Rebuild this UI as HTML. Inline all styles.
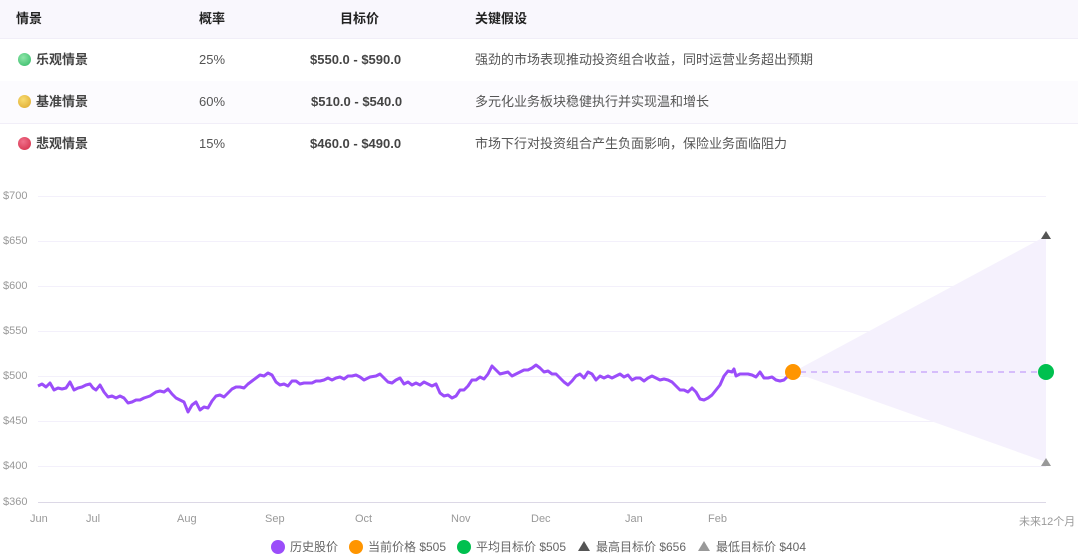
<!DOCTYPE html><html><head><meta charset="utf-8"><style>
body{margin:0;width:1087px;height:558px;background:#fff;font-family:"Liberation Sans","Noto Sans CJK SC",sans-serif;overflow:hidden;position:relative}
.row{position:absolute;left:0;width:1078px;height:42px;border-bottom:1px solid #f1eef8;font-size:13px;color:#555}
.row div{position:absolute;top:0;line-height:42px}
.h{background:#f9f7fd;height:38px;color:#222;font-weight:bold;font-size:13px}
.h div{line-height:38px}
.dot{display:inline-block;width:13px;height:13px;border-radius:50%;vertical-align:-2px;margin-right:5px}
.b{font-weight:bold;color:#444}
.ax{position:absolute;font-size:11px;color:#999}
</style></head><body>
<div class="row h" style="top:0"><div style="left:16px">情景</div><div style="left:199px">概率</div><div style="left:340px">目标价</div><div style="left:475px">关键假设</div></div>
<div class="row" style="top:39px"><div style="left:18px" class="b"><span class="dot" style="background:radial-gradient(circle at 40% 35%,#8ee6a8,#2fb865)"></span>乐观情景</div><div style="left:199px">25%</div><div style="left:310px" class="b">$550.0 - $590.0</div><div style="left:475px">强劲的市场表现推动投资组合收益，同时运营业务超出预期</div></div>
<div class="row" style="top:81px;background:#fcfbfe"><div style="left:18px" class="b"><span class="dot" style="background:radial-gradient(circle at 40% 35%,#f8dc70,#dca52a)"></span>基准情景</div><div style="left:199px">60%</div><div style="left:311px" class="b">$510.0 - $540.0</div><div style="left:475px">多元化业务板块稳健执行并实现温和增长</div></div>
<div class="row" style="top:123px;border:none"><div style="left:18px" class="b"><span class="dot" style="background:radial-gradient(circle at 40% 35%,#f0708a,#d22a45)"></span>悲观情景</div><div style="left:199px">15%</div><div style="left:310px" class="b">$460.0 - $490.0</div><div style="left:475px">市场下行对投资组合产生负面影响，保险业务面临阻力</div></div>

<div class="ax" style="left:3px;top:190px">$700</div>
<div class="ax" style="left:3px;top:235px">$650</div>
<div class="ax" style="left:3px;top:280px">$600</div>
<div class="ax" style="left:3px;top:325px">$550</div>
<div class="ax" style="left:3px;top:370px">$500</div>
<div class="ax" style="left:3px;top:415px">$450</div>
<div class="ax" style="left:3px;top:460px">$400</div>
<div class="ax" style="left:3px;top:496px">$360</div>
<div class="ax" style="left:30px;top:513px">Jun</div>
<div class="ax" style="left:86px;top:513px">Jul</div>
<div class="ax" style="left:177px;top:513px">Aug</div>
<div class="ax" style="left:265px;top:513px">Sep</div>
<div class="ax" style="left:355px;top:513px">Oct</div>
<div class="ax" style="left:451px;top:513px">Nov</div>
<div class="ax" style="left:531px;top:513px">Dec</div>
<div class="ax" style="left:625px;top:513px">Jan</div>
<div class="ax" style="left:708px;top:513px">Feb</div>
<div class="ax" style="left:1019px;top:513px">未来12个月</div>

<svg style="position:absolute;left:0;top:0" width="1087" height="558">
<g stroke="#f3f0fb" stroke-width="1">
<line x1="38" x2="1046" y1="196.5" y2="196.5"/><line x1="38" x2="1046" y1="241.5" y2="241.5"/><line x1="38" x2="1046" y1="286.5" y2="286.5"/><line x1="38" x2="1046" y1="331.5" y2="331.5"/><line x1="38" x2="1046" y1="376.5" y2="376.5"/><line x1="38" x2="1046" y1="421.5" y2="421.5"/><line x1="38" x2="1046" y1="466.5" y2="466.5"/></g>
<line x1="38" x2="1046" y1="502.5" y2="502.5" stroke="#dcd8e6"/>
<polygon points="793,372 1046,236 1046,462" fill="#f5f1fd"/>
<line x1="800" x2="1040" y1="372" y2="372" stroke="#d6bdfb" stroke-width="2" stroke-dasharray="6,5"/>
<polyline fill="none" stroke="#9b4dfa" stroke-width="3" stroke-linejoin="round" points="38,386 42,384 46,387 50,383 54,390 58,388 62,389 66,388 70,382 74,390 78,388 82,387 86,385 90,384 93,388 96,390 100,385 104,392 108,397 112,396 116,398 120,396 124,398 128,403 132,402 136,400 140,400 144,398 150,396 156,392 160,391 164,392 168,389 172,394 176,398 180,400 184,402 188,412 192,405 196,402 200,410 204,407 208,408 212,401 216,396 220,395 224,397 228,393 232,389 236,387 240,387 244,388 248,384 252,381 256,378 260,375 264,376 268,373 272,375 276,382 280,385 284,384 288,386 292,381 296,381 300,384 304,383 308,383 312,383 316,381 320,381 324,380 328,378 332,380 336,378 340,377 344,379 348,376 352,376 356,375 360,377 364,380 370,377 376,376 380,374 384,378 388,382 392,383 396,380 400,378 404,384 408,382 412,385 416,383 420,385 424,382 428,384 432,386 436,384 440,393 444,396 448,395 452,398 456,396 460,390 464,390 468,386 472,380 476,380 480,377 484,379 488,374 492,366 496,370 500,374 504,373 508,372 512,376 516,374 520,372 524,370 528,370 532,368 536,365 540,368 544,372 548,371 552,374 556,374 560,378 564,382 568,385 572,381 576,376 580,374 584,378 588,372 592,374 596,380 600,376 604,378 608,376 612,378 616,376 620,374 624,377 628,375 632,380 636,378 640,378 644,381 648,378 652,376 656,378 660,380 664,379 668,380 672,382 676,386 680,390 684,390 688,392 692,388 696,392 700,399 704,400 708,398 712,395 716,390 720,385 724,376 728,371 732,372 734,369 736,376 740,374 744,374 748,374 752,375 756,377 760,372 764,378 768,378 772,377 776,380 780,381 784,380 788,376 793,372"/>
<circle cx="793" cy="372" r="8" fill="#ff9500"/>
<circle cx="1046" cy="372" r="8" fill="#00c04f"/>
<polygon points="1046,231 1051,239 1041,239" fill="#555"/>
<polygon points="1046,458 1051,466 1041,466" fill="#999"/>
<circle cx="278" cy="547" r="7" fill="#9b4dfa"/>
<circle cx="356" cy="547" r="7" fill="#ff9500"/>
<circle cx="464" cy="547" r="7" fill="#00c04f"/>
<polygon points="584,541 590,551 578,551" fill="#555"/>
<polygon points="704,541 710,551 698,551" fill="#999"/>
<g font-size="12" fill="#666" font-family="Liberation Sans,Noto Sans CJK SC,sans-serif">
<text x="290" y="551">历史股价</text><text x="368" y="551">当前价格 $505</text><text x="476" y="551">平均目标价 $505</text><text x="596" y="551">最高目标价 $656</text><text x="716" y="551">最低目标价 $404</text></g>
</svg>
</body></html>
